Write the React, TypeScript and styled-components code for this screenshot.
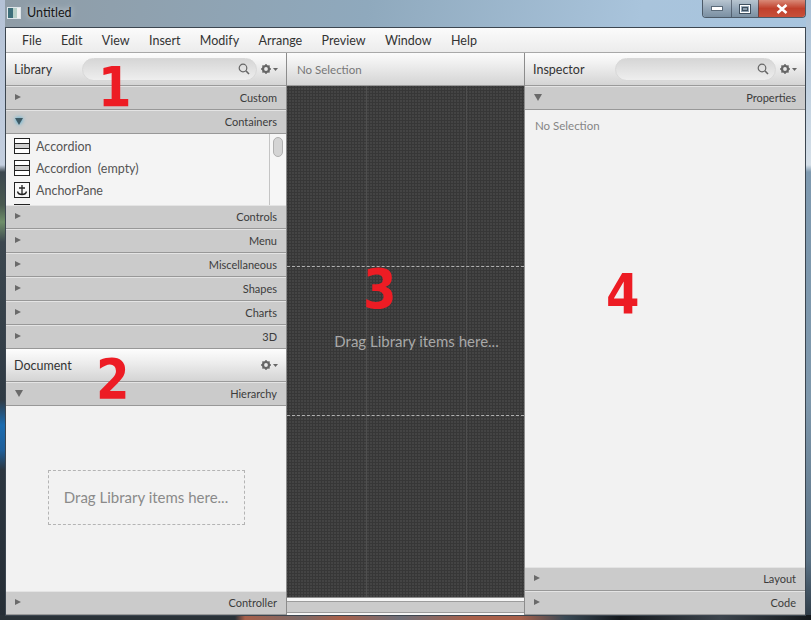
import React from 'react'
import styled, { createGlobalStyle } from 'styled-components'

const GlobalStyle = createGlobalStyle`
  html, body {
    margin: 0;
    padding: 0;
    background: #8ea6bb;
  }
  * {
    box-sizing: border-box;
  }
`

const Desktop = styled.div`
  position: relative;
  width: 811px;
  height: 620px;
  overflow: hidden;
  display: flex;
  flex-direction: column;
  padding: 0 5px 4px;
  font-family: Lato, 'Liberation Sans', sans-serif;
  font-size: 12.5px;
  color: #3a3a3a;
  background:
    linear-gradient(to right, #2a3238 0, #2a3238 235px, #a8604a 245px, #7c6a68 300px, #a8604a 340px, #6f6f78 400px, #a8604a 470px, #a8604a 520px, #3a4a55 565px, #14181c 620px, #3c444c 720px, #14181c 811px) 0 100% / 100% 5px no-repeat,
    linear-gradient(to bottom, #b4c2d6 0, #c4cfdf 165px, #3c474f 172px, #4a5a50 205px, #6f8f6a 222px, #3c474f 242px, #2f3a44 400px, #1b6cb0 425px, #1f5f9a 450px, #2c3640 470px, #262e36 100%) 0 0 / 5px 100% no-repeat,
    linear-gradient(to bottom, #a9c0d6 0, #d5dfe8 165px, #7f9ab0 172px, #7f98ac 400px, #5a7184 560px, #2c3843 100%) 100% 0 / 5px 100% no-repeat,
    linear-gradient(100deg, #8f9ca6 0%, #8fa9bd 40%, #a9c4dc 70%, #a7c5e0 100%);
`

const TitleBar = styled.div`
  height: 27px;
  flex: none;
  display: flex;
  align-items: flex-start;
`

const AppIcon = styled.div`
  width: 14px;
  height: 12px;
  margin: 7px 6px 0 2px;
  border: 1px solid #dfe6ea;
  background: linear-gradient(to right, #3e6f7a 0 40%, #b8d0c8 40% 75%, #f0f0f0 75%);
`

const TitleText = styled.span`
  font-size: 12.5px;
  line-height: 26px;
  color: #161616;
  text-shadow: 0 0 6px rgba(255, 255, 255, 0.8);
`

const WindowButtons = styled.div`
  margin-left: auto;
  display: flex;
  height: 18px;
  border: 1px solid #4c5a68;
  border-top: none;
  border-radius: 0 0 4px 4px;
  overflow: hidden;
`

const WinButton = styled.div<{ $close?: boolean; $w: number }>`
  width: ${p => p.$w}px;
  display: flex;
  align-items: center;
  justify-content: center;
  border-left: 1px solid rgba(50, 60, 75, 0.6);
  background: ${p =>
    p.$close
      ? 'linear-gradient(to bottom, #d98a78, #c0402c 50%, #c8503a)'
      : 'linear-gradient(to bottom, #b8c5d0, #95a7b8 50%, #7b90a2)'};
  &:first-child {
    border-left: none;
  }
`

const Window = styled.div`
  flex: 1;
  min-height: 0;
  display: flex;
  flex-direction: column;
  border: 1px solid #3c4650;
  background: #f2f2f2;
`

const MenuBar = styled.div`
  height: 25px;
  flex: none;
  display: flex;
  align-items: center;
  padding-left: 16px;
  gap: 19.4px;
  background: linear-gradient(to bottom, #fbfbfb, #ececec);
  border-bottom: 1px solid #a8a8a8;
`

const MenuItem = styled.span`
  color: #333;
`

const Columns = styled.div`
  flex: 1;
  min-height: 0;
  display: grid;
  grid-template-columns: 281px 238px 1fr;
`

const Column = styled.div`
  display: flex;
  flex-direction: column;
  min-height: 0;
  background: #f2f2f2;
  border-right: 1px solid #8c8c8c;
  &:last-child {
    border-right: none;
  }
`

const PanelHeader = styled.div<{ $h?: number }>`
  height: ${p => p.$h ?? 33}px;
  flex: none;
  display: flex;
  align-items: center;
  padding: 0 8px 0 8px;
  background: linear-gradient(to bottom, #fdfdfd, #f0f0f0 35%, #d4d4d4);
  border-bottom: 1px solid #9a9a9a;
`

const PanelTitle = styled.span`
  color: #333;
`

const SearchBox = styled.div<{ $w: number }>`
  margin-left: auto;
  width: ${p => p.$w}px;
  height: 23px;
  display: flex;
  align-items: center;
  justify-content: flex-end;
  padding-right: 6px;
  border: 1px solid #d8d8d8;
  border-radius: 12px;
  background: linear-gradient(to bottom, #d6d6d6, #eeeeee);
  color: #666;
`

const GearMenu = styled.div<{ $auto?: boolean }>`
  display: flex;
  align-items: center;
  margin-left: ${p => (p.$auto ? 'auto' : '4px')};
  color: #666;
`

const SectionRow = styled.div`
  height: 24px;
  flex: none;
  display: flex;
  align-items: center;
  justify-content: space-between;
  padding: 0 9px 2px 9px;
  background: #cbcbcb;
  border-top: 1px solid #e4e4e4;
  border-bottom: 1px solid #989898;
  font-size: 11px;
  color: #3c3c3c;
`

const Arrow = styled.span<{ $open?: boolean; $focus?: boolean }>`
  width: 0;
  height: 0;
  ${p =>
    p.$open
      ? `border-left: 4px solid transparent;
         border-right: 4px solid transparent;
         border-top: 7px solid ${p.$focus ? '#3d5a66' : '#6a6a6a'};`
      : `border-top: 3.5px solid transparent;
         border-bottom: 3.5px solid transparent;
         border-left: 6px solid #6a6a6a;`}
  ${p => p.$focus && 'filter: drop-shadow(0 0 2px #2fa8d8);'}
`

const LibraryList = styled.div`
  height: 71px;
  flex: none;
  display: flex;
  background: #f4f4f4;
  overflow: hidden;
`

const ListItems = styled.div`
  flex: 1;
  min-width: 0;
  padding-top: 1px;
`

const ListRow = styled.div`
  height: 22px;
  display: flex;
  align-items: center;
  padding-left: 8px;
  gap: 6px;
  color: #555;
  white-space: pre;
`

const ScrollTrack = styled.div`
  width: 17px;
  flex: none;
  padding: 3px 1px 0 2px;
  border-left: 1px solid #c4c4c4;
  background: #f6f6f6;
`

const ScrollThumb = styled.div`
  height: 20px;
  width: 10px;
  margin-left: 1px;
  border-radius: 5px;
  border: 1px solid #b0b0b0;
  background: #d4d4d4;
`

const HierarchyBody = styled.div`
  flex: 1;
  min-height: 0;
  display: flex;
  align-items: center;
  justify-content: center;
  padding-bottom: 3px;
  background: #f2f2f2;
`

const DropHint = styled.div`
  width: 197px;
  height: 55px;
  display: flex;
  align-items: center;
  justify-content: center;
  border: 1px dashed #b4b4b4;
  font-size: 15px;
  color: #8a8a8a;
`

const SelectionBar = styled.div`
  height: 33px;
  flex: none;
  display: flex;
  align-items: center;
  padding-left: 10px;
  font-size: 11.5px;
  color: #777;
  background: linear-gradient(to bottom, #fbfbfb, #eeeeee 35%, #d4d4d4);
  border-bottom: 1px solid #9a9a9a;
`

const Canvas = styled.div`
  flex: 1;
  min-height: 0;
  display: flex;
  flex-direction: column;
  background-color: #444;
  background-image:
    linear-gradient(to right, transparent 79px, #4e4e4e 79px, #4e4e4e 80px, transparent 80px, transparent 179px, #4e4e4e 179px, #4e4e4e 180px, transparent 180px),
    radial-gradient(#373737 1px, transparent 1.2px);
  background-size: 100% 100%, 3px 3px;
`

const CanvasBand = styled.div`
  height: 180px;
  flex: none;
`

const CanvasMiddle = styled.div`
  height: 150px;
  flex: none;
  display: flex;
  align-items: center;
  justify-content: center;
  padding: 0 0 0 22px;
  border-top: 1px dashed #b0b0b0;
  border-bottom: 1px dashed #b0b0b0;
  font-size: 15px;
  color: #a8a8a8;
`

const HScroll = styled.div`
  height: 18px;
  flex: none;
  margin-top: auto;
  padding: 3px 0 2px;
  background: #f6f6f6;
  border-top: 1px solid #8c8c8c;
`

const HThumb = styled.div`
  height: 100%;
  background: #cbcbcb;
  border-top: 1px solid #9c9c9c;
  border-bottom: 1px solid #9c9c9c;
`

const InspectorBody = styled.div`
  flex: 1;
  min-height: 0;
  padding: 9px 10px;
  font-size: 11.5px;
  color: #858585;
  background: #f2f2f2;
`

const Marker = styled.span<{ $x: number; $y: number }>`
  position: absolute;
  left: ${p => p.$x}px;
  top: ${p => p.$y}px;
  font-family: 'DejaVu Sans', 'Liberation Sans', sans-serif;
  font-weight: 700;
  font-size: 56px;
  line-height: 1;
  color: #ed1c24;
  transform: scaleX(0.86);
  transform-origin: left top;
`

const SearchIcon = () => (
  <svg width="12" height="12" viewBox="0 0 12 12" fill="none" stroke="currentColor" strokeWidth="1.2">
    <circle cx="5" cy="5" r="3.8" />
    <path d="M7.8 7.8 11 11" strokeWidth="1.6" />
  </svg>
)

const GearIcon = () => (
  <svg width="17" height="10" viewBox="0 0 17 10">
    <circle cx="5" cy="5" r="3" fill="none" stroke="currentColor" strokeWidth="2.2" />
    <path
      d="M5 0v2M5 8v2M0 5h2M8 5h2M1.5 1.5l1.4 1.4M7.1 7.1l1.4 1.4M8.5 1.5 7.1 2.9M2.9 7.1 1.5 8.5"
      stroke="currentColor"
      strokeWidth="1.4"
    />
    <path d="M12 4h5l-2.5 3z" fill="currentColor" />
  </svg>
)

const AccordionIcon = () => (
  <svg width="16" height="16" viewBox="0 0 16 16">
    <rect x="0.5" y="0.5" width="15" height="15" fill="#fff" stroke="#222" />
    <rect x="1" y="5" width="14" height="6" fill="#cfcfcf" />
    <path d="M1 5.5h14M1 10.5h14" stroke="#222" />
  </svg>
)

const AnchorIcon = () => (
  <svg width="16" height="16" viewBox="0 0 16 16" fill="none">
    <rect x="0.5" y="0.5" width="15" height="15" fill="#f8f8f8" stroke="#222" />
    <path d="M8 3v9M5 6h6M3.5 9.5C4 12 6 12.5 8 12.5s4-.5 4.5-3" stroke="#222" strokeWidth="1.3" />
  </svg>
)

const menus = ['File', 'Edit', 'View', 'Insert', 'Modify', 'Arrange', 'Preview', 'Window', 'Help']
const lowerSections = ['Controls', 'Menu', 'Miscellaneous', 'Shapes', 'Charts', '3D']

const App: React.FC = () => {
  return (
    <Desktop>
      <GlobalStyle />
      <TitleBar>
        <AppIcon />
        <TitleText>Untitled</TitleText>
        <WindowButtons>
          <WinButton $w={28}>
            <svg width="12" height="5"><rect x="0.5" y="0.5" width="11" height="4" fill="#fff" stroke="#5b6b7a" /></svg>
          </WinButton>
          <WinButton $w={27}>
            <svg width="12" height="10">
              <rect x="0.5" y="0.5" width="11" height="9" fill="none" stroke="#3f4f5e" />
              <rect x="1.5" y="1.5" width="9" height="7" fill="none" stroke="#fff" />
              <rect x="3.5" y="3.5" width="5" height="3" fill="#8a9cac" stroke="#3f4f5e" />
            </svg>
          </WinButton>
          <WinButton $w={47} $close>
            <svg width="12" height="10"><path d="M1.5 1 10.5 9M10.5 1 1.5 9" stroke="#fff" strokeWidth="2.6" /></svg>
          </WinButton>
        </WindowButtons>
      </TitleBar>
      <Window>
        <MenuBar>
          {menus.map(m => (
            <MenuItem key={m}>{m}</MenuItem>
          ))}
        </MenuBar>
        <Columns>
          <Column>
            <PanelHeader>
              <PanelTitle>Library</PanelTitle>
              <SearchBox $w={175}>
                <SearchIcon />
              </SearchBox>
              <GearMenu>
                <GearIcon />
              </GearMenu>
            </PanelHeader>
            <SectionRow>
              <Arrow />
              Custom
            </SectionRow>
            <SectionRow>
              <Arrow $open $focus />
              Containers
            </SectionRow>
            <LibraryList>
              <ListItems>
                <ListRow>
                  <AccordionIcon />
                  Accordion
                </ListRow>
                <ListRow>
                  <AccordionIcon />
                  {'Accordion  (empty)'}
                </ListRow>
                <ListRow>
                  <AnchorIcon />
                  AnchorPane
                </ListRow>
                <ListRow>
                  <AccordionIcon />
                </ListRow>
              </ListItems>
              <ScrollTrack>
                <ScrollThumb />
              </ScrollTrack>
            </LibraryList>
            {lowerSections.map(s => (
              <SectionRow key={s}>
                <Arrow />
                {s}
              </SectionRow>
            ))}
            <PanelHeader>
              <PanelTitle>Document</PanelTitle>
              <GearMenu $auto>
                <GearIcon />
              </GearMenu>
            </PanelHeader>
            <SectionRow>
              <Arrow $open />
              Hierarchy
            </SectionRow>
            <HierarchyBody>
              <DropHint>Drag Library items here...</DropHint>
            </HierarchyBody>
            <SectionRow>
              <Arrow />
              Controller
            </SectionRow>
          </Column>
          <Column>
            <SelectionBar>No Selection</SelectionBar>
            <Canvas>
              <CanvasBand />
              <CanvasMiddle>Drag Library items here...</CanvasMiddle>
            </Canvas>
            <HScroll>
              <HThumb />
            </HScroll>
          </Column>
          <Column>
            <PanelHeader>
              <PanelTitle>Inspector</PanelTitle>
              <SearchBox $w={161}>
                <SearchIcon />
              </SearchBox>
              <GearMenu>
                <GearIcon />
              </GearMenu>
            </PanelHeader>
            <SectionRow>
              <Arrow $open />
              Properties
            </SectionRow>
            <InspectorBody>No Selection</InspectorBody>
            <SectionRow>
              <Arrow />
              Layout
            </SectionRow>
            <SectionRow>
              <Arrow />
              Code
            </SectionRow>
          </Column>
        </Columns>
      </Window>
      <Marker $x={98} $y={59}>1</Marker>
      <Marker $x={96} $y={351}>2</Marker>
      <Marker $x={363} $y={261}>3</Marker>
      <Marker $x={606} $y={266}>4</Marker>
    </Desktop>
  )
}

export default App
